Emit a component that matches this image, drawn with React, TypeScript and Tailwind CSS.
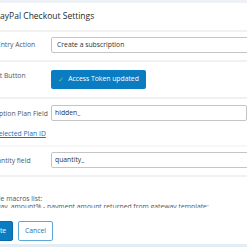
const font = { fontFamily: '"Open Sans", "Noto Sans", sans-serif' };

const Row = ({
  label,
  children,
  className,
  labelPad,
}: {
  label: string;
  children: React.ReactNode;
  className: string;
  labelPad: string;
}) => (
  <div className={`flex border-b-2 border-[#f1f1f1] ${className}`}>
    <div className={`w-[75px] shrink-0 whitespace-nowrap text-[6.8px] text-[#50575e] leading-[10px] ${labelPad}`}>
      {label}
    </div>
    <div className="flex-1">{children}</div>
  </div>
);

export default function App() {
  return (
    <div className="w-[247px] h-[247px] overflow-hidden bg-white flex flex-col" style={font}>
      <div className="h-[3px] shrink-0 bg-[#eef1f5]" />
      <div className="h-[29px] shrink-0 flex items-center -ml-[5px] border-b-2 border-[#f1f1f1] text-[8.5px] font-medium text-[#23282d]">
        PayPal Checkout Settings
      </div>

      <div className="-ml-[24px] w-[271px]">
        <Row label="Billing Entry Action" className="h-[30px] pt-[5px]" labelPad="pt-[3px]">
          <div className="h-[16px] w-[220px] border border-[#c3c4c7] rounded-[2px] px-[5px] flex items-center text-[6.8px] text-[#2c3338]">
            Create a subscription
          </div>
        </Row>

        <Row label="Connect Button" className="h-[37px] pt-[8px]" labelPad="pt-[1px]">
          <div className="h-[19px] w-[95px] bg-[#0a7dc2] rounded-[2px] flex items-center justify-center gap-[4px] text-[6.8px] text-white">
            <span className="text-[#5fd35f] text-[7px] leading-none">✓</span>
            <span>Access Token updated</span>
          </div>
        </Row>

        <div className="border-b-2 border-[#f7f7f7] h-[48px] pt-[6px]">
          <div className="flex">
            <div className="w-[75px] shrink-0 whitespace-nowrap text-[6.8px] text-[#50575e] leading-[10px] pt-[4px]">
              Subscription Plan Field
            </div>
            <div className="h-[16px] w-[220px] border border-[#c3c4c7] rounded-[2px] px-[3px] flex items-center text-[6.8px] text-[#2c3338]">
              hidden_
            </div>
          </div>
          <div className="mt-[8px] whitespace-nowrap text-[6.8px] leading-[10px] text-[#2271b1] underline">
            Show Selected Plan ID
          </div>
        </div>

        <Row label="Set Quantity field" className="h-[30px] pt-[5px]" labelPad="pt-[4px]">
          <div className="h-[16px] w-[220px] border border-[#c3c4c7] rounded-[2px] px-[3px] flex items-center text-[6.8px] text-[#2c3338]">
            quantity_
          </div>
        </Row>

        <div className="pt-[18px] h-[31px] overflow-hidden whitespace-nowrap text-[6.8px] leading-[8px] text-[#50575e]">
          <div>Available macros list:</div>
          <div>%gateway_amount% - payment amount returned from gateway template:</div>
        </div>

        <div className="h-[13px]" />

        <div className="flex gap-[5px] h-[20px]">
          <div className="w-[37px] h-[20px] bg-[#0a7dc2] border border-[#0a6aa6] rounded-[2px] flex items-center justify-center text-[6.8px] text-white">
            Update
          </div>
          <div className="w-[35px] h-[20px] bg-white border border-[#5aa9d6] rounded-[2px] flex items-center justify-center text-[6.8px] text-[#2271b1]">
            Cancel
          </div>
        </div>
      </div>
      <div className="flex-1" />
      <div className="h-[3px] shrink-0 bg-[#e4ecf4]" />
    </div>
  );
}
